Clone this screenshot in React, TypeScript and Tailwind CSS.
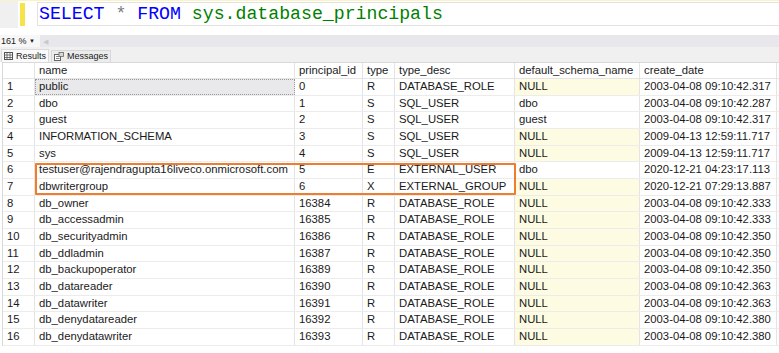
import React from "react";

type Row = [string, string, string, string, string | null, string];

const rows: Row[] = [
  ["public", "0", "R", "DATABASE_ROLE", null, "2003-04-08 09:10:42.317"],
  ["dbo", "1", "S", "SQL_USER", "dbo", "2003-04-08 09:10:42.287"],
  ["guest", "2", "S", "SQL_USER", "guest", "2003-04-08 09:10:42.317"],
  ["INFORMATION_SCHEMA", "3", "S", "SQL_USER", null, "2009-04-13 12:59:11.717"],
  ["sys", "4", "S", "SQL_USER", null, "2009-04-13 12:59:11.717"],
  ["testuser@rajendragupta16liveco.onmicrosoft.com", "5", "E", "EXTERNAL_USER", "dbo", "2020-12-21 04:23:17.113"],
  ["dbwritergroup", "6", "X", "EXTERNAL_GROUP", null, "2020-12-21 07:29:13.887"],
  ["db_owner", "16384", "R", "DATABASE_ROLE", null, "2003-04-08 09:10:42.333"],
  ["db_accessadmin", "16385", "R", "DATABASE_ROLE", null, "2003-04-08 09:10:42.333"],
  ["db_securityadmin", "16386", "R", "DATABASE_ROLE", null, "2003-04-08 09:10:42.350"],
  ["db_ddladmin", "16387", "R", "DATABASE_ROLE", null, "2003-04-08 09:10:42.350"],
  ["db_backupoperator", "16389", "R", "DATABASE_ROLE", null, "2003-04-08 09:10:42.350"],
  ["db_datareader", "16390", "R", "DATABASE_ROLE", null, "2003-04-08 09:10:42.363"],
  ["db_datawriter", "16391", "R", "DATABASE_ROLE", null, "2003-04-08 09:10:42.363"],
  ["db_denydatareader", "16392", "R", "DATABASE_ROLE", null, "2003-04-08 09:10:42.380"],
  ["db_denydatawriter", "16393", "R", "DATABASE_ROLE", null, "2003-04-08 09:10:42.380"],
];

const cols = "grid grid-cols-[32px_260px_68px_32px_120px_125px_137px]";
const cell = "flex items-center px-[4px] border-r border-[#e4e4e4] whitespace-nowrap overflow-hidden";

function GridIcon() {
  return (
    <svg width="9" height="8" viewBox="0 0 9 8" className="mr-[3px]">
      <rect x="0.5" y="0.5" width="8" height="7" fill="#fff" stroke="#555" />
      <path d="M0.5 3H8.5M0.5 5.5H8.5M3 0.5V7.5M6 0.5V7.5" stroke="#555" strokeWidth="0.8" />
    </svg>
  );
}

function MsgIcon() {
  return (
    <svg width="10" height="9" viewBox="0 0 10 9" className="mr-[3px]">
      <rect x="0.5" y="2.5" width="6" height="6" fill="#fff" stroke="#666" />
      <path d="M2 4.5H5.5M2 6.5H5.5" stroke="#666" strokeWidth="0.8" />
      <rect x="5" y="0.5" width="4.5" height="4" fill="#d8d8d8" stroke="#666" strokeWidth="0.8" />
    </svg>
  );
}

export default function App() {
  return (
    <div className="w-[779px] h-[353px] overflow-hidden bg-white font-['Liberation_Sans',Arial,sans-serif] text-[#1a1a1a]">
      {/* query editor */}
      <div className="flex h-[35px] border-t border-[#fbf3c4]">
        <div className="w-[18px] h-[27px] bg-[#f0f0f0]" />
        <div className="ml-[2px] mt-[2px] w-[5px] h-[23px] bg-[#f6e34a]" />
        <div className="ml-[12px] mt-[1px] flex-1 h-[24px] border-y border-l border-[#e2e2e2] flex items-center pl-[1px] font-['Liberation_Mono',monospace] text-[18.2px] leading-none">
          <span className="text-[#0000ff]">SELECT</span>
          <span className="text-[#808080]">&nbsp;*&nbsp;</span>
          <span className="text-[#0000ff]">FROM</span>
          <span className="text-[#008000]">&nbsp;sys.database_principals</span>
        </div>
      </div>

      {/* zoom bar */}
      <div className="flex h-[12px] text-[9px] leading-none">
        <div className="w-[40px] flex items-center justify-between pl-[1px] pr-[5px] bg-[#f7f7f7]">
          <span>161 %</span>
          <span className="text-[6px]">▼</span>
        </div>
        <div className="flex-1 bg-[#e8e8ec] flex items-center pl-[3px] text-[#c8c8cc] text-[7px]">◀</div>
      </div>

      {/* tabs */}
      <div className="flex items-end h-[15px] bg-[#f0f0f0] px-[1px] text-[9px] leading-none">
        <div className="flex items-center h-[13px] px-[2px] bg-[#f9f9f9] border border-b-0 border-[#dadada]">
          <GridIcon />
          <span>Results</span>
        </div>
        <div className="flex items-center h-[12px] px-[2px] ml-[2px] bg-[#ececec] border border-b-0 border-[#d8d8d8]">
          <MsgIcon />
          <span>Messages</span>
        </div>
      </div>

      {/* result grid */}
      <div className="relative ml-[2px] border-l border-t border-[#d9d9d9] text-[11.3px] leading-none">
        <div className={`${cols} h-[16px] border-b border-[#e4e4e4]`}>
          <div className={cell} />
          <div className={cell}>name</div>
          <div className={cell}>principal_id</div>
          <div className={cell}>type</div>
          <div className={cell}>type_desc</div>
          <div className={cell}>default_schema_name</div>
          <div className={cell}>create_date</div>
        </div>
        {rows.map((r, i) => (
          <div key={i} className={`${cols} h-[16.67px] border-b border-[#ececec]`}>
            <div className={cell}>{i + 1}</div>
            <div
              className={
                i === 0
                  ? "flex items-center px-[3px] whitespace-nowrap bg-[#e9e9eb] border border-dotted border-[#9a9a9a]"
                  : cell
              }
            >
              {r[0]}
            </div>
            <div className={cell}>{r[1]}</div>
            <div className={cell}>{r[2]}</div>
            <div className={cell}>{r[3]}</div>
            <div className={`${cell} ${r[4] === null ? "bg-[#fdfce3]" : ""}`}>{r[4] ?? "NULL"}</div>
            <div className={cell}>{r[5]}</div>
          </div>
        ))}
        {/* highlight around external principals */}
        <div className="absolute left-[32px] top-[100px] w-[481px] h-[32px] border-2 border-[#ee7d30] rounded-[1px] pointer-events-none" />
      </div>
    </div>
  );
}
